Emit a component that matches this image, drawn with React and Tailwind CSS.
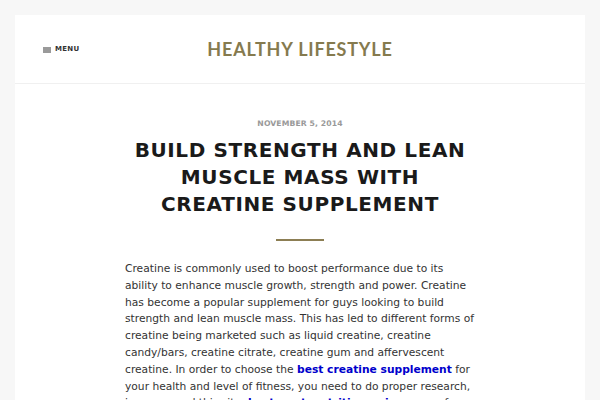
import React from 'react';

const App = () => {
    return (
        <div className="w-[600px] h-[400px] overflow-hidden bg-[#f7f7f7] px-[15px] pt-[15px]" style={{ fontFamily: '"DejaVu Sans", sans-serif' }}>
            {/* header */}
            <div className="relative h-[68px] bg-white flex items-center justify-center">
                <div className="absolute left-[28px] top-[31px] flex items-center gap-[4px]">
                    <svg width="8" height="6" viewBox="0 0 8 6">
                        <rect x="0" y="0" width="8" height="6" fill="#9a9a9a" />
                    </svg>
                    <span className="text-[7px] font-bold tracking-[0.3px] text-[#333] leading-none">MENU</span>
                </div>
                <h1 className="text-[18px] font-bold tracking-[0.8px] text-[#857a4e] leading-none" style={{ fontFamily: 'Lato, sans-serif' }}>
                    HEALTHY LIFESTYLE
                </h1>
            </div>
            <div className="h-px bg-[#f0f0f0]"></div>

            {/* post */}
            <div className="bg-white h-[320px] pt-[34px]">
                <div className="text-center text-[7.7px] leading-[12px] font-bold tracking-[0.1px] text-[#999]">
                    NOVEMBER 5, 2014
                </div>
                <h2 className="mt-[7px] mx-auto w-[340px] text-center text-[20px] leading-[27px] font-bold tracking-[0.6px] text-[#1a1a1a]">
                    BUILD STRENGTH AND LEAN MUSCLE MASS WITH CREATINE SUPPLEMENT
                </h2>
                <div className="mx-auto mt-[21px] w-[48px] h-[2px] bg-[#8c7e53]"></div>
                <p className="mt-[20px] ml-[110px] w-[351px] text-[10.7px] leading-[16.8px] text-[#333]">
                    Creatine is commonly used to boost performance due to its ability to enhance muscle growth, strength and power. Creatine has become a popular supplement for guys looking to build strength and lean muscle mass. This has led to different forms of creatine being marketed such as liquid creatine, creatine candy/bars, creatine citrate, creatine gum and affervescent creatine. In order to choose the{' '}
                    <a href="#" className="font-bold text-[#0000cc]">best creatine supplement</a>{' '}
                    for your health and level of fitness, you need to do proper research, i recommend this site:{' '}
                    <a href="#" className="font-bold text-[#0000cc]">bestsportsnutritionreviews.com</a>{' '}
                    for best results.
                </p>
            </div>
        </div>
    );
};

export default App;
